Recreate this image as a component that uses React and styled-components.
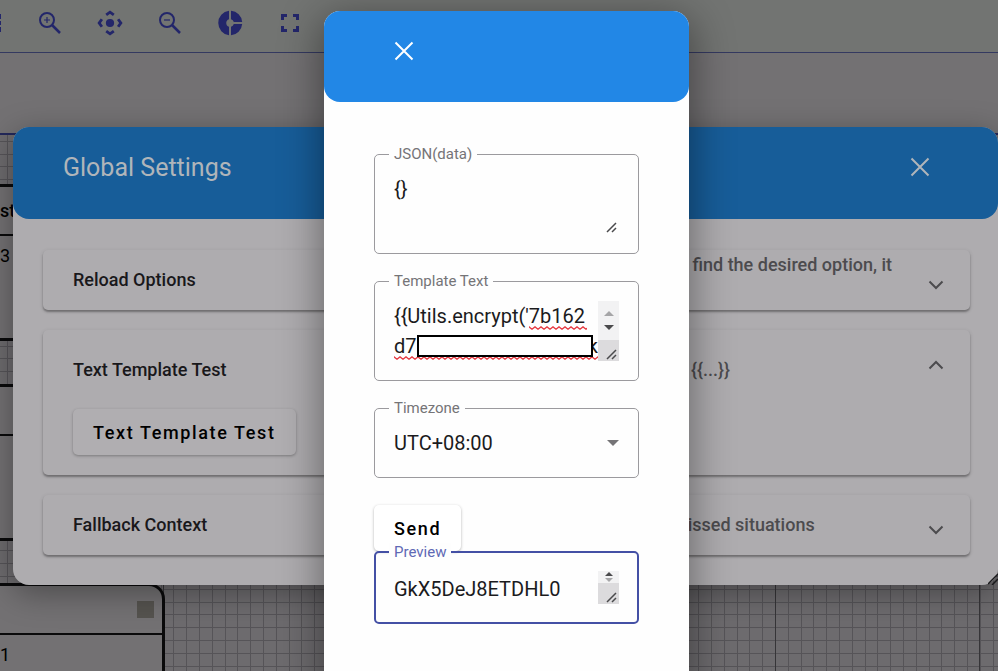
import React, { useState } from 'react';
import styled, { createGlobalStyle } from 'styled-components';

const GlobalStyle = createGlobalStyle`
  * {
    box-sizing: border-box;
  }
  body {
    margin: 0;
    overflow: hidden;
    font-family: Roboto, "Liberation Sans", sans-serif;
    font-size: 18px;
    color: #000;
  }
  button, textarea, select {
    font-family: inherit;
    margin: 0;
  }
`;

const S_Page = styled.div`
  position: relative;
  display: flex;
  flex-direction: column;
  min-height: 100vh;
  overflow: hidden;
  background-color: #737173;
`;
const S_Toolbar = styled.header`
  display: flex;
  flex: none;
  height: 53px;
  margin-left: -40px;
  padding-bottom: 6px;
  background-color: #727472;
  border-bottom: 1px solid #343960;
`;
const S_ToolButton = styled.button`
  display: flex;
  align-items: center;
  justify-content: center;
  width: 60px;
  padding: 0;
  border: 0;
  background: none;
  color: #23266a;
`;
const S_Band = styled.div`
  flex: none;
  height: 82px;
  border-bottom: 2px solid #23285a;
`;
const S_Canvas = styled.main`
  position: relative;
  flex: 1;
  overflow: hidden;
  background-color: #6d6b6e;
`;
const S_Grid = styled.svg`
  position: absolute;
  inset: 0;
  width: 100%;
  height: 100%;
`;
const S_Node = styled.section`
  position: absolute;
  left: -3px;
  top: ${(p) => p.$top}px;
  width: 168px;
  height: 157px;
  border: 3px solid #0a0a0b;
  border-radius: 0 16px 0 0;
  background-color: #737173;
`;
const S_NodeHead = styled.div`
  display: flex;
  align-items: center;
  justify-content: space-between;
  height: 49px;
  padding-right: 8px;
  border-bottom: 2px solid #0a0a0b;
  font-weight: 500;
`;
const S_NodeBody = styled.div`
  line-height: 40px;
`;
const S_NodeMark = styled.span`
  width: 17px;
  height: 17px;
  margin-left: auto;
  background-color: #55534f;
`;

const S_Overlay = styled.div`
  position: absolute;
  inset: 0;
  display: flex;
  align-items: flex-start;
  justify-content: center;
  padding: ${(p) => p.$padding};
  overflow: hidden;
`;
const S_SettingsDialog = styled.section`
  position: relative;
  flex: 1;
  border-radius: 16px;
  background-color: #aeacaf;
  box-shadow: 0 8px 32px rgba(0, 0, 0, 0.35);
`;
const S_TestDialog = styled.section`
  width: 365px;
  min-height: 100vh;
  border-radius: 16px 16px 0 0;
  background-color: #fefefe;
  box-shadow: 0 10px 40px 4px rgba(0, 0, 0, 0.4);
`;
const S_DialogHead = styled.div`
  display: flex;
  align-items: flex-start;
  justify-content: space-between;
  padding: 20px 68px 31px 50px;
  border-radius: 16px;
  background-color: ${(p) => (p.$dimmed ? '#175d99' : '#2287e6')};
  color: ${(p) => (p.$dimmed ? '#b0b5ba' : '#fff')};
`;
const S_DialogTitle = styled.h1`
  margin: 0;
  font-size: 25px;
  font-weight: 400;
  line-height: 41px;
`;
const S_CloseButton = styled.button`
  display: flex;
  align-items: center;
  height: 40px;
  margin-left: 20px;
  padding: 0;
  border: 0;
  background: none;
  color: inherit;
`;
const S_Panels = styled.div`
  display: flex;
  flex-direction: column;
  gap: 20px;
  padding: 31px 28px 30px 30px;
`;
const S_Panel = styled.article`
  border-radius: 5px;
  background-color: #aeacaf;
  box-shadow: 0 2px 2px rgba(0, 0, 0, 0.3), 0 1px 4px rgba(0, 0, 0, 0.12);
`;
const S_PanelHead = styled.div`
  display: flex;
  align-items: center;
  height: ${(p) => (p.$open ? 79 : 60)}px;
  padding: 0 22px 0 30px;
`;
const S_PanelTitle = styled.h2`
  flex: 1;
  margin: 0;
  font-size: 18px;
  font-weight: 500;
  line-height: 22px;
  color: #19181b;
`;
const S_PanelHint = styled.p`
  width: 252px;
  margin: 0;
  font-weight: 500;
  line-height: 30px;
  color: #4c4b4e;
`;
const S_PanelToggle = styled.button`
  display: flex;
  padding: 0;
  border: 0;
  background: none;
  color: #4c4b4e;
  transform: ${(p) => (p.$open ? 'rotate(180deg)' : 'none')};
`;
const S_PanelBody = styled.div`
  padding: 0 30px 20px;
`;
const S_Button = styled.button`
  display: block;
  height: 46px;
  padding: 0 20px;
  border: 0;
  border-radius: 5px;
  background-color: ${(p) => (p.$dimmed ? '#b0aeb1' : '#fff')};
  box-shadow: 0 1px 3px rgba(0, 0, 0, 0.3);
  font-size: 18px;
  font-weight: 500;
  letter-spacing: 0.09em;
  color: #000;
`;
const S_Corner = styled.svg`
  position: absolute;
  right: 0;
  bottom: 0;
`;

const S_Form = styled.form`
  display: flex;
  flex-direction: column;
  gap: 27px;
  padding: 52px 50px;
`;
const S_Field = styled.div`
  position: relative;
  padding: ${(p) => (p.$focused ? 18 : 19)}px;
  border: ${(p) => (p.$focused ? '2px solid #4450a5' : '1px solid #9b9a9e')};
  border-radius: 5px;
`;
const S_Label = styled.label`
  position: absolute;
  top: -10px;
  left: ${(p) => (p.$focused ? 13 : 14)}px;
  padding: 0 5px;
  background-color: #fefefe;
  font-size: 15px;
  line-height: 18px;
  color: ${(p) => (p.$focused ? '#5f69b5' : '#757477')};
`;
const S_Control = styled.div`
  position: relative;
  display: flex;
`;
const S_Textarea = styled.textarea`
  flex: 1;
  min-width: 0;
  height: ${(p) => p.$height}px;
  padding: 0;
  border: 0;
  outline: 0;
  resize: none;
  overflow: hidden;
  background: none;
  font-size: 20px;
  line-height: ${(p) => p.$line || 30}px;
  white-space: pre;
  color: #1b1b1d;
`;
const S_Select = styled.select`
  flex: 1;
  height: 30px;
  padding: 0;
  border: 0;
  outline: 0;
  appearance: none;
  background: none;
  font-size: 20px;
  color: #1b1b1d;
`;
const S_SelectArrow = styled.span`
  display: flex;
  align-items: center;
  pointer-events: none;
`;
const S_Scroll = styled.div`
  position: relative;
  z-index: 1;
  display: flex;
  flex-direction: column;
  width: 21px;
  background-color: #f2f2f3;
`;
const S_ScrollArrows = styled.div`
  display: flex;
  flex: 1;
  flex-direction: column;
  align-items: center;
  justify-content: space-evenly;
`;
const S_Grip = styled.div`
  display: flex;
  align-items: flex-end;
  justify-content: flex-end;
  align-self: flex-end;
  width: 21px;
  height: 21px;
  background-color: ${(p) => (p.$plain ? 'transparent' : '#dcdbdd')};
`;
const S_Squiggle = styled.svg`
  position: absolute;
  top: ${(p) => p.$top}px;
  left: ${(p) => p.$left}px;
  width: ${(p) => p.$width}px;
  height: 4px;
`;
const S_Redaction = styled.div`
  position: absolute;
  top: 34px;
  right: 26px;
  width: 176px;
  height: 22px;
  border: 2px solid #000;
  background-color: #fff;
`;
const S_Rest = styled.span`
  position: absolute;
  top: 30px;
  right: 21px;
  font-size: 20px;
  line-height: 30px;
  color: #1b1b1d;
`;
const S_Result = styled.div`
  display: flex;
  flex-direction: column;
  align-items: flex-start;

  ${S_Field} {
    width: 100%;
  }
`;

const ZoomIcon = ({ plus }) => (
  <svg width="24" height="24" viewBox="0 0 24 24" fill="none" stroke="currentColor">
    <circle cx="9" cy="9" r="7" strokeWidth="2" />
    <path d="M14 14l8 8" strokeWidth="2.5" />
    <path d={plus ? 'M6 9h6M9 6v6' : 'M6 9h6'} strokeWidth="1.2" />
  </svg>
);
const CenterIcon = () => (
  <svg width="26" height="26" viewBox="0 0 24 24" fill="none" stroke="currentColor" strokeWidth="2.6">
    <circle cx="12" cy="12" r="3.8" fill="currentColor" stroke="none" />
    <path d="M8.5 4.5L12 2l3.5 2.5M8.5 19.5L12 22l3.5-2.5M4.5 8.5L2 12l2.5 3.5M19.5 8.5L22 12l-2.5 3.5" />
  </svg>
);
const ChartIcon = () => (
  <svg width="26" height="26" viewBox="0 0 26 26" fill="currentColor">
    <path d="M12 .8v8.4A4 4 0 0 0 12 16.8v8.4A12.3 12.3 0 0 1 12 .8z" />
    <path d="M14 .8A12.3 12.3 0 0 1 25.2 12h-8.4A4 4 0 0 0 14 9.2z" />
    <path d="M14 16.8A4 4 0 0 0 16.8 14h8.4A12.3 12.3 0 0 1 14 25.2z" />
  </svg>
);
const FullscreenIcon = () => (
  <svg width="24" height="24" viewBox="0 0 24 24" fill="none" stroke="currentColor" strokeWidth="3">
    <path d="M4.5 9V4.5H9M15 4.5h4.5V9M19.5 15v4.5H15M9 19.5H4.5V15" />
  </svg>
);
const TableIcon = () => (
  <svg width="24" height="24" viewBox="0 0 24 24" fill="currentColor">
    <path d="M2 3h21v5H2zM2 10h21v4H2zM2 16h21v5H2z" />
  </svg>
);
const CloseIcon = () => (
  <svg width="20" height="20" viewBox="0 0 20 20" stroke="currentColor" strokeWidth="2">
    <path d="M1.5 1.5l17 17M18.5 1.5l-17 17" />
  </svg>
);
const ChevronIcon = () => (
  <svg width="24" height="24" viewBox="0 0 24 24" fill="none" stroke="currentColor" strokeWidth="2">
    <path d="M5.5 13.5L12 20l6.5-6.5" />
  </svg>
);
const Triangle = ({ up, size = 10, color = '#4a4a4c' }) => (
  <svg width={size} height={size / 2} viewBox="0 0 10 5" fill={color}>
    <path d={up ? 'M0 5l5-5 5 5z' : 'M0 0l5 5 5-5z'} />
  </svg>
);
const GripLines = () => (
  <svg width="14" height="14" viewBox="0 0 14 14" stroke="#4a4a4c" strokeWidth="1.5">
    <path d="M2 12l9-9M7 12l4-4" />
  </svg>
);

const Squiggle = ({ top, left, width }) => (
  <S_Squiggle $top={top} $left={left} $width={width}>
    <defs>
      <pattern id={`wave${top}`} width="6" height="4" patternUnits="userSpaceOnUse">
        <path d="M-1 1.5L0 .8l3 2.4 3-2.4 1 .7" fill="none" stroke="#e5383f" strokeWidth="1.3" />
      </pattern>
    </defs>
    <rect width="100%" height="4" fill={`url(#wave${top})`} />
  </S_Squiggle>
);

const CanvasGrid = () => (
  <S_Grid>
    <defs>
      <pattern id="minor" x="7" y="57" width="64" height="64" patternUnits="userSpaceOnUse">
        <path
          d="M0 .5h64M0 13.5h64M0 26.5h64M0 38.5h64M0 51.5h64M.5 0v64M13.5 0v64M26.5 0v64M38.5 0v64M51.5 0v64"
          stroke="#565458"
        />
      </pattern>
      <pattern id="major" x="163" width="204" height="204" patternUnits="userSpaceOnUse">
        <path d="M.5 0v204" stroke="#363538" />
      </pattern>
    </defs>
    <rect width="100%" height="100%" fill="url(#minor)" />
    <rect width="100%" height="100%" fill="url(#major)" />
  </S_Grid>
);

const tools = [
  { name: 'Table', icon: <TableIcon /> },
  { name: 'Zoom in', icon: <ZoomIcon plus /> },
  { name: 'Center', icon: <CenterIcon /> },
  { name: 'Zoom out', icon: <ZoomIcon /> },
  { name: 'Chart', icon: <ChartIcon /> },
  { name: 'Fullscreen', icon: <FullscreenIcon /> },
];

function Panel({ title, hint, open, children }) {
  return (
    <S_Panel>
      <S_PanelHead $open={open}>
        <S_PanelTitle>{title}</S_PanelTitle>
        <S_PanelHint>{hint}</S_PanelHint>
        <S_PanelToggle type="button" aria-label={title} aria-expanded={!!open} $open={open}>
          <ChevronIcon />
        </S_PanelToggle>
      </S_PanelHead>
      {children && <S_PanelBody>{children}</S_PanelBody>}
    </S_Panel>
  );
}

function App() {
  const [data, setData] = useState('{}');
  const [template, setTemplate] = useState("{{Utils.encrypt('7b162\nd7");
  const [preview, setPreview] = useState('GkX5DeJ8ETDHL0');

  return (
    <>
      <GlobalStyle />
      <S_Page>
        <S_Toolbar>
          {tools.map((i) => (
            <S_ToolButton key={i.name} type="button" aria-label={i.name}>
              {i.icon}
            </S_ToolButton>
          ))}
        </S_Toolbar>
        <S_Band />
        <S_Canvas>
          <CanvasGrid />
          <S_Node $top={49}>
            <S_NodeHead>st</S_NodeHead>
            <S_NodeBody>3</S_NodeBody>
          </S_Node>
          <S_Node $top={249}>
            <S_NodeHead />
          </S_Node>
          <S_Node $top={448}>
            <S_NodeHead>
              <S_NodeMark />
            </S_NodeHead>
            <S_NodeBody>1</S_NodeBody>
          </S_Node>
        </S_Canvas>

        <S_Overlay $padding="127px 0 0 13px">
          <S_SettingsDialog>
            <S_DialogHead $dimmed>
              <S_DialogTitle>Global Settings</S_DialogTitle>
              <S_CloseButton type="button" aria-label="Close settings">
                <CloseIcon />
              </S_CloseButton>
            </S_DialogHead>
            <S_Panels>
              <Panel
                title="Reload Options"
                hint={
                  <>
                    to find the desired option, it
                    <br />
                    is
                  </>
                }
              />
              <Panel title="Text Template Test" hint="in {{...}}" open>
                <S_Button type="button" $dimmed>
                  Text Template Test
                </S_Button>
              </Panel>
              <Panel title="Fallback Context" hint="missed situations" />
            </S_Panels>
            <S_Corner width="10" height="12" viewBox="0 0 10 12" stroke="#1b1b1d" strokeWidth="1.5">
              <path d="M0 11L10 1M4 12l6-6" />
            </S_Corner>
          </S_SettingsDialog>
        </S_Overlay>

        <S_Overlay $padding="11px 0 0 15px">
          <S_TestDialog>
            <S_DialogHead>
              <S_CloseButton type="button" aria-label="Close">
                <CloseIcon />
              </S_CloseButton>
            </S_DialogHead>
            <S_Form onSubmit={(e) => e.preventDefault()}>
              <S_Field>
                <S_Label htmlFor="data">JSON(data)</S_Label>
                <S_Control>
                  <S_Textarea
                    id="data"
                    $height={60}
                    spellCheck={false}
                    value={data}
                    onChange={(e) => setData(e.target.value)}
                  />
                  <S_Grip $plain>
                    <GripLines />
                  </S_Grip>
                </S_Control>
              </S_Field>
              <S_Field>
                <S_Label htmlFor="template">Template Text</S_Label>
                <S_Control>
                  <S_Textarea
                    id="template"
                    $height={60}
                    spellCheck={false}
                    value={template}
                    onChange={(e) => setTemplate(e.target.value)}
                  />
                  <S_Scroll>
                    <S_ScrollArrows>
                      <Triangle up color="#a5a5a7" />
                      <Triangle />
                    </S_ScrollArrows>
                    <S_Grip>
                      <GripLines />
                    </S_Grip>
                  </S_Scroll>
                  <Squiggle top={25} left={135} width={58} />
                  <Squiggle top={55} left={0} width={204} />
                  <S_Rest>k</S_Rest>
                  <S_Redaction />
                </S_Control>
              </S_Field>
              <S_Field>
                <S_Label htmlFor="timezone">Timezone</S_Label>
                <S_Control>
                  <S_Select id="timezone" defaultValue="+8">
                    <option value="+8">UTC+08:00</option>
                  </S_Select>
                  <S_SelectArrow>
                    <Triangle size={12} color="#757477" />
                  </S_SelectArrow>
                </S_Control>
              </S_Field>
              <S_Result>
                <S_Button type="submit">Send</S_Button>
                <S_Field $focused>
                  <S_Label htmlFor="preview" $focused>
                    Preview
                  </S_Label>
                  <S_Control>
                    <S_Textarea
                      id="preview"
                      $height={33}
                      $line={36}
                      spellCheck={false}
                      value={preview}
                      onChange={(e) => setPreview(e.target.value)}
                    />
                    <S_Scroll>
                      <S_ScrollArrows>
                        <Triangle up size={8} />
                        <Triangle size={8} color="#a5a5a7" />
                      </S_ScrollArrows>
                      <S_Grip>
                        <GripLines />
                      </S_Grip>
                    </S_Scroll>
                  </S_Control>
                </S_Field>
              </S_Result>
            </S_Form>
          </S_TestDialog>
        </S_Overlay>
      </S_Page>
    </>
  );
}

export default App;
